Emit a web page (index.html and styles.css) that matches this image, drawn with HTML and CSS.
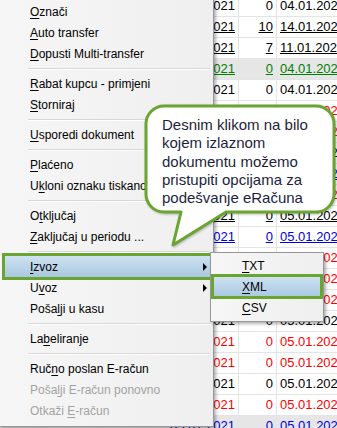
FILE: index.html
```html
<!DOCTYPE html>
<html>
<head>
  <meta charset="UTF-8">
  <title>Izlazni dokumenti - eRačun</title>
  <link rel="stylesheet" href="styles.css">
</head>
<body>

  <div class="screen">

    <div class="grid">
      <div class="row"><span class="cell c1">04.01.2021</span><span class="cell c2">0</span><span class="cell c3">04.01.2021</span></div>
      <div class="row ul"><span class="cell c1">14.01.2021</span><span class="cell c2">10</span><span class="cell c3">14.01.2021</span></div>
      <div class="row ul"><span class="cell c1">11.01.2021</span><span class="cell c2">7</span><span class="cell c3">11.01.2021</span></div>
      <div class="row ul green sel"><span class="cell c1">04.01.2021</span><span class="cell c2">0</span><span class="cell c3">04.01.2021</span></div>
      <div class="row"><span class="cell c1">04.01.2021</span><span class="cell c2">0</span><span class="cell c3">04.01.2021</span></div>
      <div class="row red"><span class="cell c1">05.01.2021</span><span class="cell c2">0</span><span class="cell c3">05.01.2021</span></div>
      <div class="row red"><span class="cell c1">05.01.2021</span><span class="cell c2">0</span><span class="cell c3">05.01.2021</span></div>
      <div class="row"><span class="cell c1">05.01.2021</span><span class="cell c2">0</span><span class="cell c3">05.01.2021</span></div>
      <div class="row ul blue"><span class="cell c1">05.01.2021</span><span class="cell c2">0</span><span class="cell c3">05.01.2021</span></div>
      <div class="row red"><span class="cell c1">05.01.2021</span><span class="cell c2">0</span><span class="cell c3">05.01.2021</span></div>
      <div class="row ul"><span class="cell c1">05.01.2021</span><span class="cell c2">0</span><span class="cell c3">05.01.2021</span></div>
      <div class="row ul blue"><span class="cell c1">05.01.2021</span><span class="cell c2">0</span><span class="cell c3">05.01.2021</span></div>
      <div class="row red"><span class="cell c1">05.01.2021</span><span class="cell c2">0</span><span class="cell c3">05.01.2021</span></div>
      <div class="row red"><span class="cell c1">05.01.2021</span><span class="cell c2">0</span><span class="cell c3">05.01.2021</span></div>
      <div class="row red"><span class="cell c1">05.01.2021</span><span class="cell c2">0</span><span class="cell c3">05.01.2021</span></div>
      <div class="row"><span class="cell c1">05.01.2021</span><span class="cell c2">0</span><span class="cell c3">05.01.2021</span></div>
      <div class="row red"><span class="cell c1">05.01.2021</span><span class="cell c2">0</span><span class="cell c3">05.01.2021</span></div>
      <div class="row red"><span class="cell c1">05.01.2021</span><span class="cell c2">0</span><span class="cell c3">05.01.2021</span></div>
      <div class="row"><span class="cell c1">05.01.2021</span><span class="cell c2">0</span><span class="cell c3">05.01.2021</span></div>
      <div class="row red"><span class="cell c1">05.01.2021</span><span class="cell c2">0</span><span class="cell c3">05.01.2021</span></div>
      <div class="row ul blue sel"><span class="cell c1">05.01.2021</span><span class="cell c2">0</span><span class="cell c3">05.01.2021</span></div>
    </div>

    <div class="menu">
      <div class="item"><span><u>O</u>znači</span></div>
      <div class="item"><span><u>A</u>uto transfer</span></div>
      <div class="item"><span><u>D</u>opusti Multi-transfer</span></div>
      <div class="sep"></div>
      <div class="item"><span><u>R</u>abat kupcu - primjeni</span></div>
      <div class="item"><span><u>S</u>torniraj</span></div>
      <div class="sep"></div>
      <div class="item"><span><u>U</u>sporedi dokument</span></div>
      <div class="sep"></div>
      <div class="item"><span><u>P</u>laćeno</span></div>
      <div class="item"><span>U<u>k</u>loni oznaku tiskano</span></div>
      <div class="sep"></div>
      <div class="item"><span>O<u>t</u>ključaj</span></div>
      <div class="item"><span><u>Z</u>aključaj u periodu ...</span></div>
      <div class="sep"></div>
      <div class="item hl"><span><u>I</u>zvoz</span><span class="arrow"></span></div>
      <div class="item"><span>U<u>v</u>oz</span><span class="arrow"></span></div>
      <div class="item"><span>Poša<u>l</u>ji u kasu</span></div>
      <div class="sep"></div>
      <div class="item"><span>La<u>b</u>eliranje</span></div>
      <div class="sep"></div>
      <div class="item"><span>Ruč<u>n</u>o poslan E-račun</span></div>
      <div class="item disabled"><span>Poša<u>l</u>ji E-račun ponovno</span></div>
      <div class="item disabled"><span>Otkaži <u>E</u>-račun</span></div>
    </div>

    <div class="submenu">
      <div class="item"><span><u>T</u>XT</span></div>
      <div class="item hl small"><span><u>X</u>ML</span></div>
      <div class="item"><span><u>C</u>SV</span></div>
    </div>

    <div class="bubble">
      <svg class="bubble-shape" width="195" height="146" viewBox="0 0 195 146">
        <path d="M21 3 H173 A18 18 0 0 1 191 21 V91 A18 18 0 0 1 173 109 H83 L30 142 L38 109 H21 A18 18 0 0 1 3 91 V21 A18 18 0 0 1 21 3 Z"
              fill="#fff" stroke="#6aa431" stroke-width="3" stroke-linejoin="round"/>
      </svg>
      <p>Desnim klikom na bilo<br>kojem izlaznom<br>dokumentu možemo<br>pristupiti opcijama za<br>podešvanje eRačuna</p>
    </div>

  </div>

</body>
</html>
```

FILE: styles.css
```css
:root {
  --menu-border: #979797;
  --menu-text: #000;
  --menu-disabled: #a3a3a3;
  --mark-green: #6aa431;
  --grid-line: #e4e4e4;
}
body {
  margin: 0;
  background: #fff;
}
.screen {
  position: relative;
  width: 337px;
  height: 428px;
  overflow: hidden;
  background: #fff;
}

/* grid behind the popup */
.grid {
  margin-top: -4px;
  font-family: "Liberation Sans", Arial, sans-serif;
  font-size: 13px;
  color: #000;
}
.row {
  display: grid;
  grid-template-columns: 239px 38px 1fr;
  height: 21px;
  box-sizing: border-box;
  border-bottom: 1px solid var(--grid-line);
  line-height: 20px;
  white-space: nowrap;
}
.cell {
  overflow: hidden;
}
.c1 {
  text-align: right;
  padding-right: 3px;
  border-right: 1px solid var(--grid-line);
}
.c2 {
  text-align: right;
  padding-right: 3px;
  border-right: 1px solid var(--grid-line);
}
.c3 {
  padding-left: 3px;
}
.row.ul .cell { text-decoration: underline; }
.row.red { color: #f00; }
.row.blue { color: #0000e0; }
.row.green { color: #008000; }
.row.sel { background: #e6e6e6; }

/* context menu */
.menu, .submenu {
  position: absolute;
  box-sizing: border-box;
  font-family: "Liberation Sans", Arial, sans-serif;
  font-size: 12px;
  color: var(--menu-text);
  background: linear-gradient(to right, #f6f6f6, #efefef);
  border: 1px solid var(--menu-border);
  box-shadow: 2px 2px 3px rgba(0,0,0,0.3);
}
.menu {
  left: -1px;
  top: -4px;
  width: 215px;
  padding: 4px 3px 5px 5px;
}
.submenu {
  left: 210px;
  top: 252px;
  width: 114px;
  padding: 2px 2px 3px 2px;
}
.item {
  display: flex;
  justify-content: space-between;
  align-items: center;
  height: 21px;
  padding-left: 25px;
  white-space: nowrap;
}
.submenu .item {
  padding-left: 29px;
}
.item u {
  text-decoration: underline;
  text-underline-offset: 2px;
}
.item.disabled {
  color: var(--menu-disabled);
}
.item.hl {
  background: linear-gradient(#cfe2f1, #a9c8e0);
  outline: 3px solid var(--mark-green);
}
.item.hl.small {
  outline-offset: -1px;
}
.arrow {
  width: 0;
  height: 0;
  margin-right: 3px;
  border-left: 4px solid #000;
  border-top: 4px solid transparent;
  border-bottom: 4px solid transparent;
}
.sep {
  height: 9px;
  margin-left: 23px;
  box-sizing: border-box;
  padding-top: 4px;
}
.sep::before {
  content: "";
  display: block;
  height: 1px;
  background: #d7d7d7;
  border-bottom: 1px solid #fff;
}

/* callout */
.bubble {
  position: absolute;
  left: 143px;
  top: 103px;
  width: 195px;
  height: 146px;
}
.bubble-shape {
  position: absolute;
  left: 0;
  top: 0;
  filter: drop-shadow(1px 1px 1px rgba(0,0,0,0.25));
}
.bubble p {
  position: relative;
  margin: 0;
  padding: 13px 0 0 19px;
  font-family: "Liberation Sans", Arial, sans-serif;
  font-size: 15px;
  line-height: 18.3px;
  color: #1e1e3c;
}
```
